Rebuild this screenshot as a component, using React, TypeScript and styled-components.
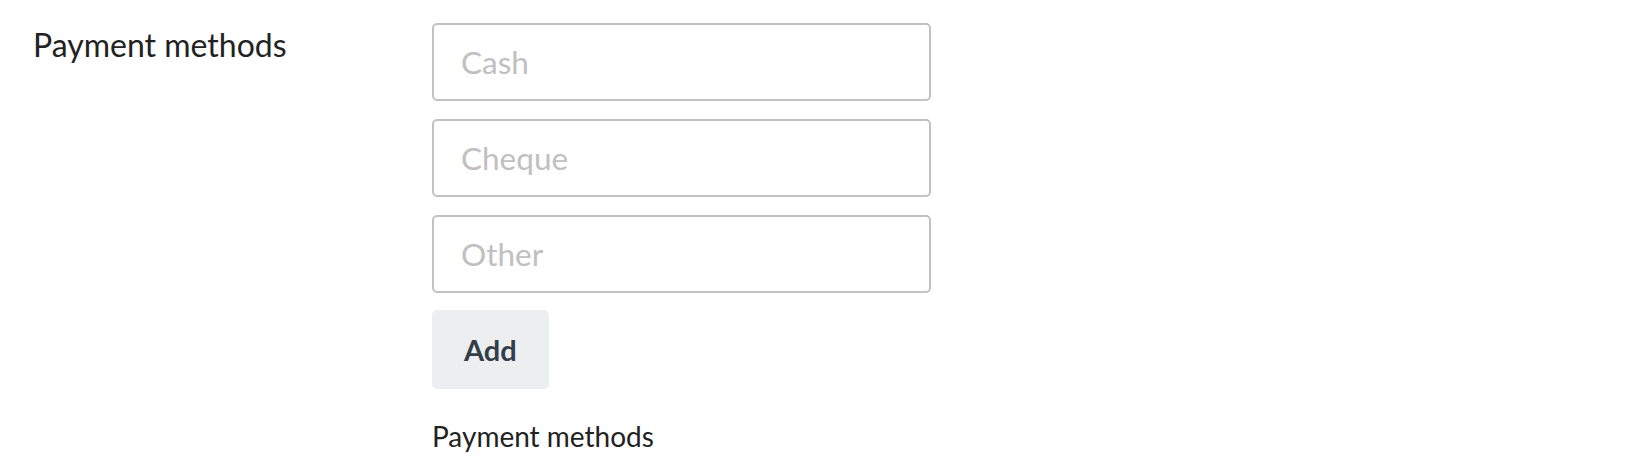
import React from "react";
import styled, { createGlobalStyle } from "styled-components";

const GlobalStyle = createGlobalStyle`
	html, body {
		margin: 0;
		padding: 0;
		background: #ffffff;
		font-family: Lato, "Noto Sans", sans-serif;
		color: #222222;
	}
`;

const Page = styled.div`
	padding: 23px 0 0 33px;
`;

const FieldRow = styled.div`
	display: flex;
	align-items: flex-start;
`;

const Label = styled.div`
	width: 399px;
	flex-shrink: 0;
	padding-top: 2px;
	font-size: 32px;
	line-height: normal;
	color: #222222;
`;

const Controls = styled.div`
	display: flex;
	flex-direction: column;
	align-items: flex-start;
`;

const InputList = styled.div`
	display: flex;
	flex-direction: column;
	gap: 18px;
`;

const TextInput = styled.input`
	box-sizing: border-box;
	width: 499px;
	height: 78px;
	margin: 0;
	padding: 0 27px;
	border: 2px solid #c2c2c2;
	border-radius: 5px;
	background: #ffffff;
	font-family: Lato, "Noto Sans", sans-serif;
	font-size: 31.5px;
	color: #222222;
	outline: none;

	&::placeholder {
		color: #c0c0c0;
		opacity: 1;
	}
`;

const AddButton = styled.button`
	box-sizing: border-box;
	margin-top: 17px;
	height: 79px;
	padding: 0 32px;
	border: none;
	border-radius: 5px;
	background: #edeef0;
	font-family: Lato, "Noto Sans", sans-serif;
	font-size: 29px;
	font-weight: 700;
	color: #333f48;
	cursor: pointer;
`;

const HelpText = styled.div`
	margin-top: 30px;
	font-size: 28px;
	line-height: normal;
	color: #222222;
`;

const methods = ["Cash", "Cheque", "Other"];

const App: React.FC = () => {
	return (
		<>
			<GlobalStyle />
			<Page>
				<FieldRow>
					<Label>Payment methods</Label>
					<Controls>
						<InputList>
							{methods.map((m) => (
								<TextInput key={m} type="text" placeholder={m} />
							))}
						</InputList>
						<AddButton type="button">Add</AddButton>
						<HelpText>Payment methods</HelpText>
					</Controls>
				</FieldRow>
			</Page>
		</>
	);
};

export default App;
